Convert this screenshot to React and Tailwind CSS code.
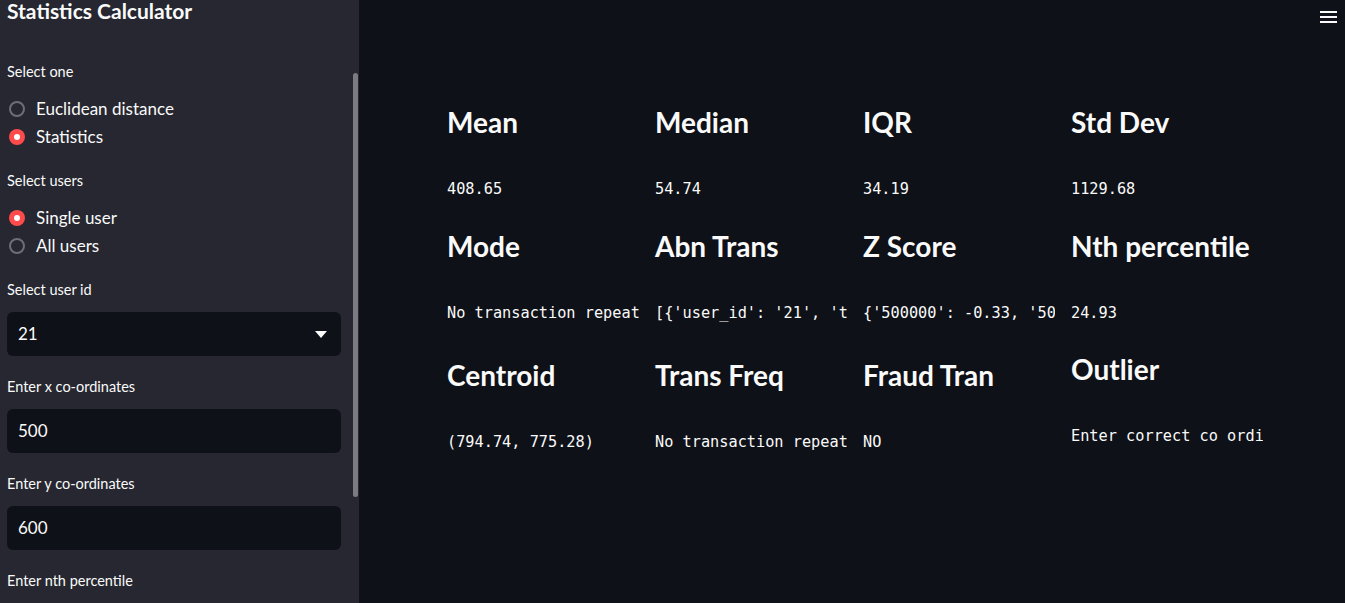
const sans = { fontFamily: '"Lato", "Noto Sans", sans-serif' }

const ROWS = [
  [
    ['Mean', '408.65'],
    ['Median', '54.74'],
    ['IQR', '34.19'],
    ['Std Dev', '1129.68'],
  ],
  [
    ['Mode', 'No transaction repeated'],
    ['Abn Trans', "[{'user_id': '21', 'transaction_amount': 500000}]"],
    ['Z Score', "{'500000': -0.33, '500': 0.41}"],
    ['Nth percentile', '24.93'],
  ],
  [
    ['Centroid', '(794.74, 775.28)'],
    ['Trans Freq', 'No transaction repeated'],
    ['Fraud Tran', 'NO'],
    ['Outlier', 'Enter correct co ordinates'],
  ],
]

function Radio({ checked, label }) {
  return (
    <div className="flex items-center h-[28px] ml-[2px] gap-[11px]">
      {checked ? (
        <span className="w-[16px] h-[16px] rounded-full bg-[#ff4b4b] flex items-center justify-center">
          <span className="w-[6px] h-[6px] rounded-full bg-white" />
        </span>
      ) : (
        <span className="w-[16px] h-[16px] rounded-full border-2 border-[#6d6e76]" />
      )}
      <span className="text-[17px] text-[#fafafa]">{label}</span>
    </div>
  )
}

function Label({ children, className = '' }) {
  return <div className={`text-[14.5px] leading-[20px] text-[#fafafa] ${className}`}>{children}</div>
}

function Field({ value, select }) {
  return (
    <div className="mt-[12px] h-[44px] rounded-[6px] bg-[#0e1117] flex items-center justify-between pl-[11px] pr-[14px] text-[17px] text-[#fafafa]">
      <span>{value}</span>
      {select && (
        <svg width="12" height="7" viewBox="0 0 12 7">
          <path d="M0 0 L12 0 L6 7 Z" fill="#fafafa" />
        </svg>
      )}
    </div>
  )
}

function Sidebar() {
  return (
    <aside className="relative w-[359px] shrink-0 h-full bg-[#262730] overflow-hidden" style={sans}>
      <div className="pl-[7px] pr-[18px]">
        <h1 className="mt-[-1px] text-[21px] leading-[24px] font-bold text-[#fafafa]">Statistics Calculator</h1>
        <Label className="mt-[39px]">Select one</Label>
        <div className="mt-[13px]">
          <Radio label="Euclidean distance" />
          <Radio checked label="Statistics" />
        </div>
        <Label className="mt-[20px]">Select users</Label>
        <div className="mt-[13px]">
          <Radio checked label="Single user" />
          <Radio label="All users" />
        </div>
        <Label className="mt-[20px]">Select user id</Label>
        <Field value="21" select />
        <Label className="mt-[21px]">Enter x co-ordinates</Label>
        <Field value="500" />
        <Label className="mt-[21px]">Enter y co-ordinates</Label>
        <Field value="600" />
        <Label className="mt-[21px]">Enter nth percentile</Label>
      </div>
      <div className="absolute right-[1px] top-[73px] w-[5px] h-[424px] rounded-full bg-[#7b7b82]" />
    </aside>
  )
}

export default function App() {
  return (
    <div className="w-[1345px] h-[603px] flex bg-[#0e1117] overflow-hidden">
      <Sidebar />
      <main className="relative flex-1 pl-[88px] pt-[104px]">
        <button className="absolute right-[8px] top-[11px] flex flex-col gap-[3px]">
          <span className="w-[17px] h-[2px] bg-[#fafafa]" />
          <span className="w-[17px] h-[2px] bg-[#fafafa]" />
          <span className="w-[17px] h-[2px] bg-[#fafafa]" />
        </button>
        {ROWS.map((row, i) => (
          <div
            key={i}
            className={`grid grid-cols-[192px_192px_192px_192px] gap-x-[16px] ${i === 1 ? 'mt-[29px]' : i === 2 ? 'mt-[34px]' : ''}`}
          >
            {row.map(([title, value]) => (
              <div key={title} className={`min-w-0 ${title === 'Outlier' ? '-mt-[6px]' : ''}`}>
                <h2 className="text-[28px] leading-[36px] font-bold text-[#fafafa]" style={sans}>
                  {title}
                </h2>
                <div
                  className="mt-[39px] text-[15.25px] leading-[20px] text-[#fafafa] whitespace-nowrap overflow-hidden"
                  style={{ fontFamily: '"DejaVu Sans Mono", "Liberation Mono", monospace' }}
                >
                  {value}
                </div>
              </div>
            ))}
          </div>
        ))}
      </main>
    </div>
  )
}
